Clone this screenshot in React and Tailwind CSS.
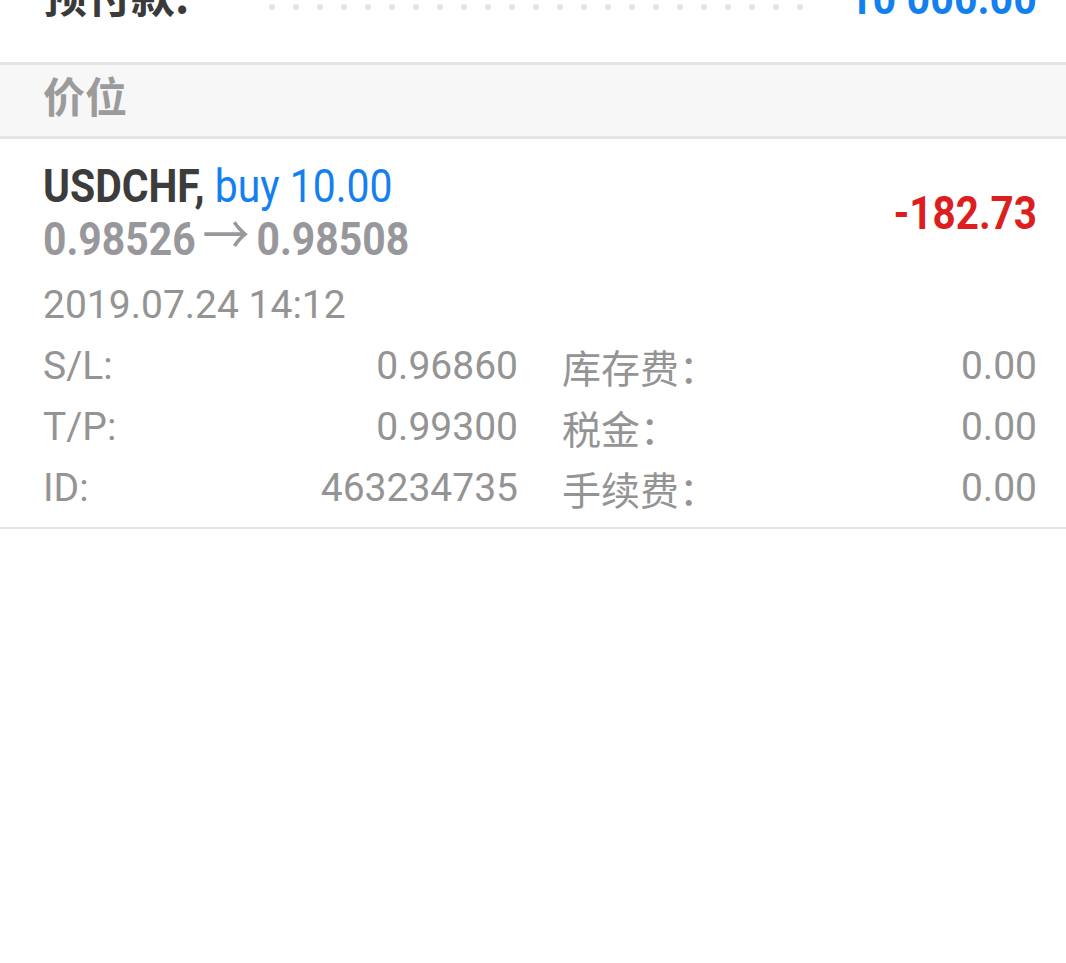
import React from "react";

function Row({ label, value, label2, value2 }) {
  return (
    <>
      <div className="flex justify-between leading-[61px]">
        <span>{label}</span>
        <span>{value}</span>
      </div>
      <div className="flex justify-between leading-[61px]">
        <span className="font-['Noto_Sans_CJK_SC',sans-serif]">{label2}</span>
        <span>{value2}</span>
      </div>
    </>
  );
}

export default function App() {
  const dots = Array.from({ length: 23 });
  return (
    <div className="w-[1066px] h-[963px] bg-white overflow-hidden font-['Roboto','Noto_Sans_CJK_SC',sans-serif]">
      {/* top row (cut) */}
      <div className="h-[62px] overflow-hidden pl-[43px] pr-[29px]">
        <div className="flex items-start -mt-[28px]">
          <div className="w-[226px] shrink-0 text-[44px] leading-[44px] font-bold text-[#3a3a3a] font-['Noto_Sans_CJK_SC',sans-serif]">
            预付款:
          </div>
          <div className="w-[534px] h-[6px] mt-[32px] flex justify-between shrink-0">
            {dots.map((_, i) => (
              <span key={i} className="w-[6px] h-[6px] rounded-full bg-[#e3e3e3]" />
            ))}
          </div>
          <div className="flex-1 text-right mt-[4px]">
            <span className="inline-block origin-right scale-x-[0.88] text-[47px] leading-[44px] font-bold text-[#1480f0] whitespace-nowrap">
              10 000.00
            </span>
          </div>
        </div>
      </div>

      {/* section header */}
      <div className="border-y-[3px] border-[#e4e4e4] bg-[#f7f7f7] h-[77px] flex items-center pl-[43px]">
        <span className="text-[42px] leading-[42px] font-bold text-[#9b9b9b] font-['Noto_Sans_CJK_SC',sans-serif] -mt-[12px]">
          价位
        </span>
      </div>

      {/* position card */}
      <div className="pl-[43px] pr-[29px] pt-[20px] pb-[8px] border-b-2 border-[#e4e4e4]">
        <div className="flex items-center">
          <div className="flex-1">
            <div className="text-[47px] leading-[53px] whitespace-nowrap">
              <span className="inline-block origin-left scale-x-[0.87]">
                <span className="font-bold text-[#3c3c3c]">USDCHF,</span>{" "}
                <span className="font-normal text-[#1480f0]">buy 10.00</span>
              </span>
            </div>
            <div className="text-[47px] leading-[53px] whitespace-nowrap font-bold text-[#98989c]">
              <span className="inline-block origin-left scale-x-[0.87]">
                0.98526
                <span className="font-normal font-['Noto_Sans_CJK_SC',sans-serif] text-[54px] leading-[0px] mx-[8px]">→</span>
                0.98508
              </span>
            </div>
          </div>
          <div className="text-[47px] leading-[53px] font-bold text-[#dc1e1e] whitespace-nowrap">
            <span className="inline-block origin-right scale-x-[0.86]">-182.73</span>
          </div>
        </div>

        <div className="mt-[10px] text-[39px] leading-[61px] text-[#949494]">2019.07.24 14:12</div>

        <div className="grid grid-cols-2 gap-x-[44px] text-[39px] text-[#949494]">
          <Row label="S/L:" value="0.96860" label2="库存费：" value2="0.00" />
          <Row label="T/P:" value="0.99300" label2="税金：" value2="0.00" />
          <Row label="ID:" value="463234735" label2="手续费：" value2="0.00" />
        </div>
      </div>
    </div>
  );
}
